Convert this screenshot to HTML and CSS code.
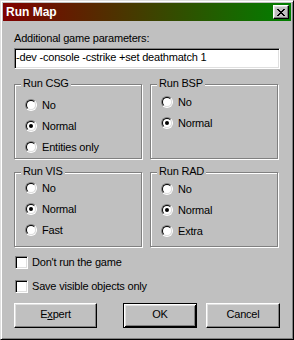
FILE: index.html
```html
<!DOCTYPE html>
<html lang="en">
<head>
    <meta charset="UTF-8">
    <title>Run Map</title>
    <link rel="stylesheet" href="styles.css">
</head>
<body>
    <div class="window">
        <div class="titlebar">
            <span class="title">Run Map</span>
            <span class="close">
                <svg width="8" height="7" viewBox="0 0 8 7" shape-rendering="crispEdges">
                    <path d="M0 0h2v1H0zM6 0h2v1H6zM1 1h2v1H1zM5 1h2v1H5zM2 2h4v1H2zM3 3h2v1H3zM2 4h4v1H2zM1 5h2v1H1zM5 5h2v1H5zM0 6h2v1H0zM6 6h2v1H6z" fill="#000"/>
                </svg>
            </span>
        </div>

        <div class="content">
            <div class="label">Additional game parameters:</div>
            <div class="field">-dev -console -cstrike +set deathmatch 1</div>

            <div class="groups">
                <div class="group">
                    <span class="legend">Run CSG</span>
                    <div class="opts opts-csg">
                        <div class="opt"><span class="radio"></span>No</div>
                        <div class="opt"><span class="radio checked"></span>Normal</div>
                        <div class="opt"><span class="radio"></span>Entities only</div>
                    </div>
                </div>
                <div class="group">
                    <span class="legend">Run BSP</span>
                    <div class="opts opts-bsp">
                        <div class="opt"><span class="radio"></span>No</div>
                        <div class="opt"><span class="radio checked"></span>Normal</div>
                    </div>
                </div>
                <div class="group">
                    <span class="legend">Run VIS</span>
                    <div class="opts opts-vis">
                        <div class="opt"><span class="radio"></span>No</div>
                        <div class="opt"><span class="radio checked"></span>Normal</div>
                        <div class="opt"><span class="radio"></span>Fast</div>
                    </div>
                </div>
                <div class="group">
                    <span class="legend">Run RAD</span>
                    <div class="opts opts-rad">
                        <div class="opt"><span class="radio"></span>No</div>
                        <div class="opt"><span class="radio checked"></span>Normal</div>
                        <div class="opt"><span class="radio"></span>Extra</div>
                    </div>
                </div>
            </div>

            <div class="checks">
                <div class="check"><span class="box"></span>Don't run the game</div>
                <div class="check"><span class="box"></span>Save visible objects only</div>
            </div>

            <div class="buttons">
                <div class="btn btn-expert">E<u>x</u>pert</div>
                <div class="btn btn-default">OK</div>
                <div class="btn btn-cancel">Cancel</div>
            </div>
        </div>
    </div>
</body>
</html>
```

FILE: styles.css
```css
body {
    margin: 0;
    background-color: #c0c0c0;
    font-family: 'Liberation Sans', Arial, sans-serif;
    font-size: 11px;
    letter-spacing: -0.2px;
    color: #000;
}
.window {
    width: 294px;
    height: 340px;
    box-sizing: border-box;
    background-color: #c0c0c0;
    border: 1px solid;
    border-color: #dfdfdf #000 #000 #dfdfdf;
    box-shadow: inset 1px 1px 0 #fff, inset -1px -1px 0 #808080;
    padding: 2px;
}
.titlebar {
    height: 18px;
    display: flex;
    align-items: center;
    padding: 0 2px 0 3px;
    background: linear-gradient(to right, #800000, #008000);
}
.title {
    color: #fff;
    font-weight: bold;
    font-size: 12px;
    letter-spacing: 0;
}
.close {
    margin-left: auto;
    width: 16px;
    height: 14px;
    box-sizing: border-box;
    display: flex;
    align-items: center;
    justify-content: center;
    background-color: #c0c0c0;
    border: 1px solid;
    border-color: #fff #000 #000 #fff;
    box-shadow: inset -1px -1px 0 #808080, inset 1px 1px 0 #dfdfdf;
}
.content {
    padding: 11px 9px 0 11px;
}
.label {
    line-height: 13px;
}
.field {
    margin-top: 3px;
    width: 266px;
    height: 21px;
    box-sizing: border-box;
    line-height: 17px;
    background-color: #fff;
    border: 1px solid;
    border-color: #808080 #fff #fff #808080;
    box-shadow: inset 1px 1px 0 #000, inset -1px -1px 0 #dfdfdf;
    padding: 0 1px;
    white-space: nowrap;
}
.groups {
    margin-top: 15px;
    display: grid;
    grid-template-columns: 128px 128px;
    grid-template-rows: 75px 75px;
    column-gap: 8px;
    row-gap: 13px;
}
.group {
    position: relative;
    box-sizing: border-box;
    border: 1px solid #808080;
    box-shadow: 1px 1px 0 #fff, inset 1px 1px 0 #fff;
}
.legend {
    position: absolute;
    top: -8px;
    left: 6px;
    padding: 0 2px;
    line-height: 13px;
    background-color: #c0c0c0;
}
.opts-csg { padding-top: 9px; }
.opts-bsp { padding-top: 6px; }
.opts-vis { padding-top: 4px; }
.opts-rad { padding-top: 5px; }
.opt {
    height: 21px;
    display: flex;
    align-items: center;
    padding-left: 10px;
}
.radio {
    width: 12px;
    height: 12px;
    box-sizing: border-box;
    border-radius: 50%;
    border: 1px solid;
    border-color: #808080 #fff #fff #808080;
    margin-right: 5px;
    display: flex;
    align-items: center;
    justify-content: center;
    position: relative;
}
.radio::before {
    content: "";
    position: absolute;
    inset: 0;
    border-radius: 50%;
    border: 1px solid;
    border-color: #000 #dfdfdf #dfdfdf #000;
    background-color: #fff;
}
.radio.checked::after {
    content: "";
    position: relative;
    width: 4px;
    height: 4px;
    border-radius: 50%;
    background-color: #000;
}
.checks {
    margin-top: 5px;
    display: flex;
    flex-direction: column;
    gap: 4px;
}
.check {
    height: 20px;
    display: flex;
    align-items: center;
    padding-left: 1px;
}
.box {
    width: 13px;
    height: 13px;
    box-sizing: border-box;
    background-color: #fff;
    border: 1px solid;
    border-color: #808080 #fff #fff #808080;
    box-shadow: inset 1px 1px 0 #000, inset -1px -1px 0 #dfdfdf;
    margin-right: 4px;
}
.buttons {
    margin-top: 7px;
    display: flex;
}
.btn {
    height: 25px;
    box-sizing: border-box;
    display: flex;
    align-items: center;
    justify-content: center;
    padding-bottom: 3px;
    background-color: #c0c0c0;
    border: 1px solid;
    border-color: #fff #000 #000 #fff;
    box-shadow: inset -1px -1px 0 #808080, inset 1px 1px 0 #dfdfdf;
}
.btn-expert {
    width: 83px;
    margin-right: 26px;
}
.btn-default {
    width: 74px;
    margin-right: 9px;
    border-color: #000;
    box-shadow: inset 1px 1px 0 #fff, inset -1px -1px 0 #000, inset 2px 2px 0 #dfdfdf, inset -2px -2px 0 #808080;
}
.btn-cancel {
    width: 74px;
}
```
